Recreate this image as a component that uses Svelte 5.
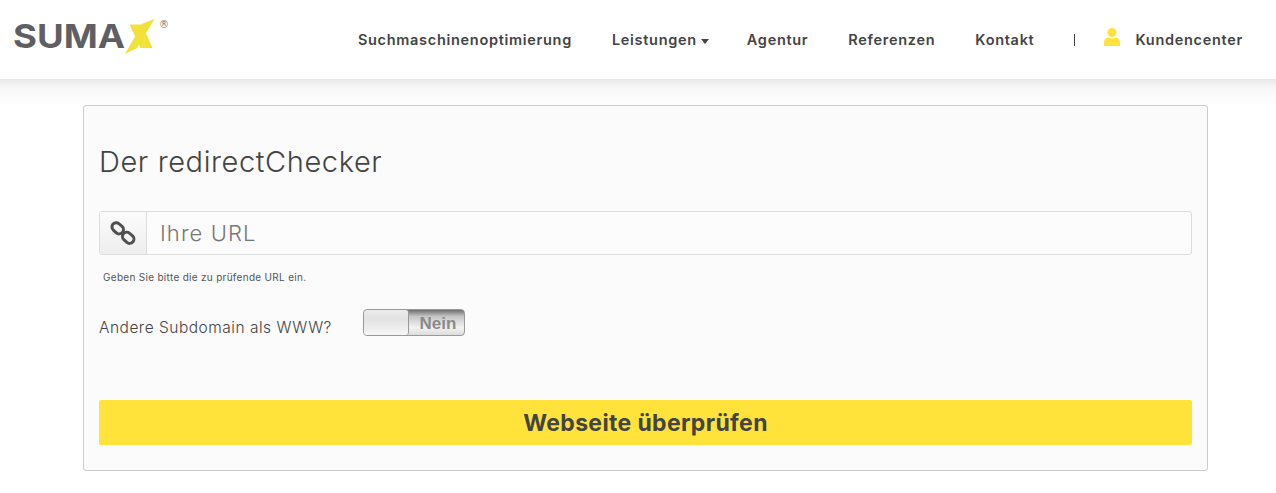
<script>
	const links = ["Suchmaschinenoptimierung", "Leistungen", "Agentur", "Referenzen", "Kontakt"];
</script>

<header class="topbar">
	<a class="logo" href="#top" aria-label="SUMAX">
		<svg width="156" height="56" viewBox="0 0 156 56">
			<text class="logo-word" x="13" y="48" textLength="112" lengthAdjust="spacingAndGlyphs">SUMA</text>
			<polygon class="logo-x" points="154.500,19 142.500,23.500 125,54 137,48" />
			<polygon class="logo-x" points="129.500,24.500 142,24.500 152.500,48 140.500,48" />
		</svg>
		<span class="reg">®</span>
	</a>
	<nav class="menu">
		{#each links as link}
			<a href="#top" class:tight={link === "Leistungen"}>{link}{#if link === "Leistungen"}<i class="caret"></i>{/if}</a>
		{/each}
		<span class="divider"></span>
		<a class="account" href="#top">
			<svg width="16" height="18" viewBox="0 0 16 18">
				<circle cx="8" cy="4.500" r="4.500" />
				<path d="M0 18v-3.500C0 11.500 2.500 9.500 4.500 9.500c1 .6 2.200 1 3.500 1s2.500-.4 3.500-1c2 0 4.500 2 4.500 5V18z" />
			</svg>
			Kundencenter
		</a>
	</nav>
</header>

<div class="shade"></div>

<main class="page">
	<section class="card">
		<h1>Der redirectChecker</h1>
		<div class="input-group">
			<span class="addon">
				<svg width="26" height="26" viewBox="0 0 26 26" fill="none" stroke="#505050" stroke-width="3">
					<rect x="1.500" y="4" width="12.500" height="8.500" rx="4.200" transform="rotate(42 7.700 8.200)" />
					<rect x="12" y="13.500" width="12.500" height="8.500" rx="4.200" transform="rotate(42 18.200 17.700)" />
				</svg>
			</span>
			<input type="text" placeholder="Ihre URL" />
		</div>
		<p class="help">Geben Sie bitte die zu prüfende URL ein.</p>
		<div class="option">
			<span class="option-label">Andere Subdomain als WWW?</span>
			<div class="switch">
				<span class="knob"></span>
				<span class="state">Nein</span>
			</div>
		</div>
		<button type="button">Webseite überprüfen</button>
	</section>
</main>

<style>
	:global(body) {
		margin: 0;
		background: #fff;
		font-family: Inter, "Liberation Sans", sans-serif;
		color: #444;
		overflow: hidden;
	}

	.topbar {
		height: 79px;
		display: flex;
		justify-content: space-between;
		background: #fff;
	}

	.logo {
		position: relative;
		display: block;
		width: 170px;
	}

	.logo-word {
		font-family: Inter, sans-serif;
		font-weight: 700;
		font-size: 33px;
		fill: #5f5f61;
	}

	.logo-x {
		fill: #f1e139;
	}

	.reg {
		position: absolute;
		left: 159px;
		top: 19px;
		font: 10px "DejaVu Sans", sans-serif;
		color: #777;
	}

	.menu {
		display: flex;
		align-items: center;
		padding-right: 33px;
		gap: 40px;
	}

	.menu a {
		color: #444;
		font-size: 14.500px;
		font-weight: 600;
		text-decoration: none;
		letter-spacing: 0.7px;
	}

	.menu a.tight {
		margin-right: -2px;
	}

	.caret {
		display: inline-block;
		margin-left: 4px;
		vertical-align: 1px;
		border: 4.500px solid transparent;
		border-top: 5px solid #444;
		border-bottom: 0;
	}

	.divider {
		width: 1px;
		height: 12px;
		background: #444;
	}

	.menu .account {
		display: flex;
		align-items: center;
		gap: 15px;
		margin-left: -11px;
	}

	.account svg {
		fill: #ffe23b;
		margin-top: -5px;
	}

	.shade {
		height: 26px;
		background: linear-gradient(#e7e7e7, #f6f6f6 30%, #fff);
	}

	.page {
		padding: 0 68px 0 83px;
	}

	.card {
		height: 364px;
		padding: 0 15px;
		background: #fbfbfb;
		border: 1px solid #ccc;
		border-radius: 3px;
		display: flex;
		flex-direction: column;
	}

	h1 {
		margin: 39px 0 0;
		font-size: 29px;
		line-height: 34px;
		font-weight: 300;
		letter-spacing: 0.6px;
		color: #444;
	}

	.input-group {
		display: flex;
		height: 44px;
		margin-top: 32px;
		background: #fcfcfc;
		border: 1px solid #ddd;
		border-radius: 3px;
		box-sizing: border-box;
	}

	.addon {
		width: 47px;
		flex: none;
		display: flex;
		align-items: center;
		justify-content: center;
		background: linear-gradient(#fbfbfb, #eee);
		border-right: 1px solid #ddd;
		box-sizing: border-box;
	}

	input {
		flex: 1;
		min-width: 0;
		padding: 0 13px;
		border: 0;
		outline: 0;
		background: transparent;
		font: 300 22px Inter, sans-serif;
		letter-spacing: 1.100px;
	}

	input::placeholder {
		color: #777;
		opacity: 1;
	}

	.help {
		margin: 16px 0 0 4px;
		font-size: 10px;
		line-height: 12px;
		letter-spacing: 0.3px;
		color: #555;
	}

	.option {
		display: flex;
		margin-top: 26px;
		height: 27px;
	}

	.option-label {
		width: 264px;
		padding-top: 10px;
		font-size: 15.500px;
		line-height: 18px;
		font-weight: 300;
		letter-spacing: 0.5px;
	}

	.switch {
		display: flex;
		width: 102px;
		height: 27px;
		box-sizing: border-box;
		border: 1px solid #999;
		border-radius: 4px;
		background: linear-gradient(#6e6e6e, #c4c4c4 25%, #f2f2f2 70%, #ddd);
		overflow: hidden;
	}

	.knob {
		width: 44px;
		background: linear-gradient(#ececec, #e2e2e2 35%, #f6f6f6);
		border-right: 1px solid #999;
		border-radius: 0 3px 3px 0;
	}

	.state {
		flex: 1;
		padding-left: 3px;
		text-align: center;
		font: 700 17px/28px "Liberation Sans", sans-serif;
		color: #8a8a8a;
	}

	button {
		margin-top: 64px;
		height: 45px;
		border: 0;
		border-radius: 2px;
		background: #ffe33b;
		color: #444;
		font: 700 23px Inter, sans-serif;
		letter-spacing: 0.35px;
	}
</style>
